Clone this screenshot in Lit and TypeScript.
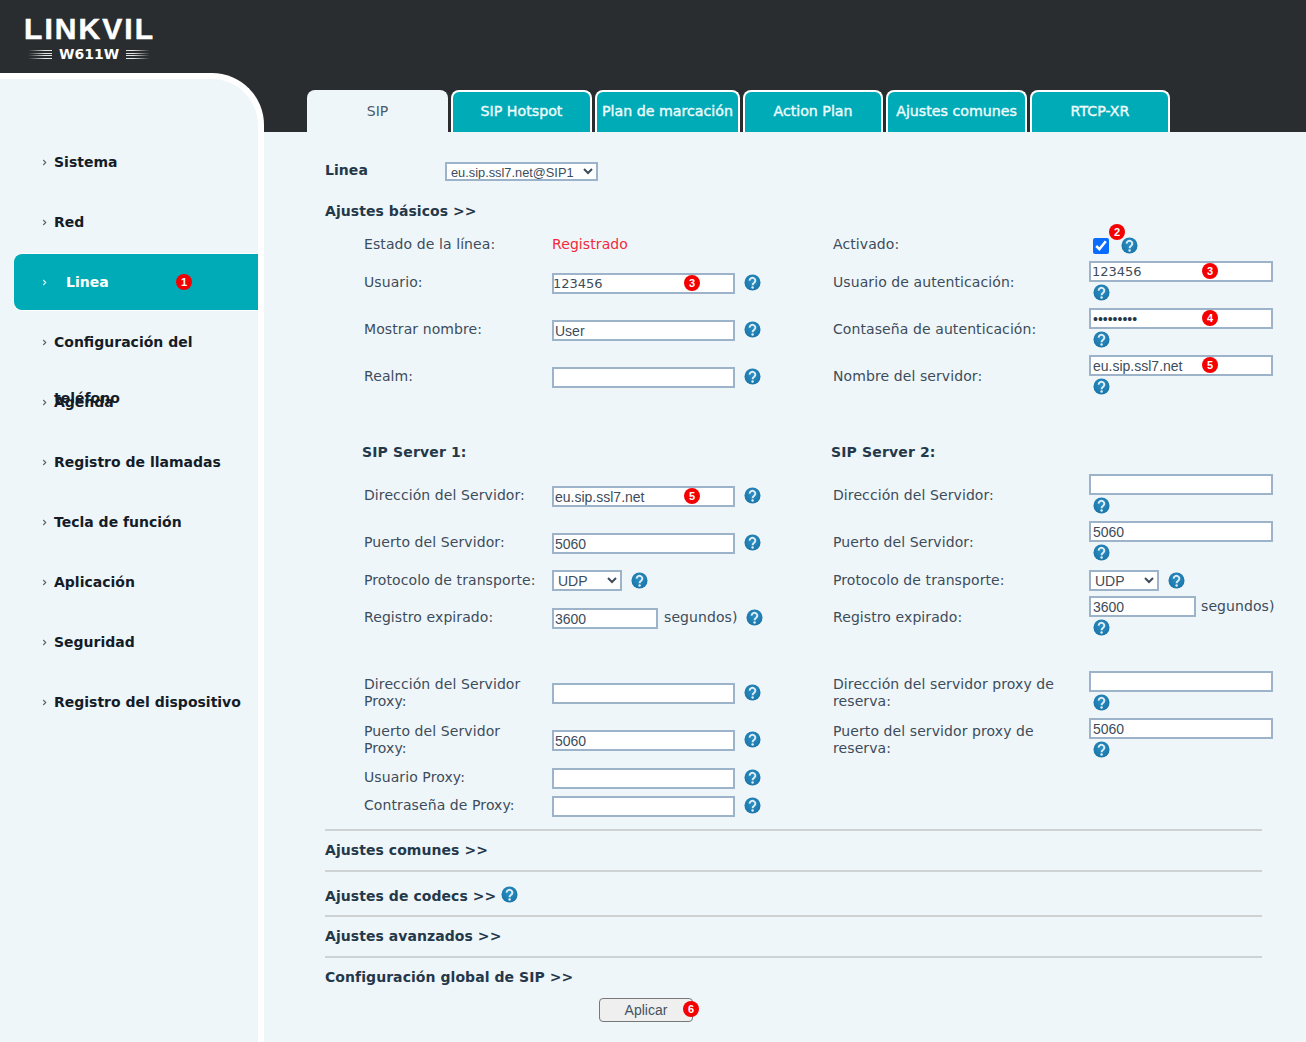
import { LitElement, html, css, svg } from "lit";
import { customElement } from "lit/decorators.js";

const help = () => html`<svg class="help" viewBox="0 0 18 18" aria-hidden="true">
  <defs><radialGradient id="hg" cx="50%" cy="40%" r="60%"><stop offset="0" stop-color="#2a8fc4"/><stop offset="1" stop-color="#1b75a8"/></radialGradient></defs>
  <circle cx="9" cy="9" r="8.5" fill="url(#hg)"/>
  ${svg`<path d="M6 7a3 2.9 0 1 1 4.9 2.2c-1.2.9-1.8 1.3-1.8 2.6" fill="none" stroke="#dfeef6" stroke-width="2.1"/><circle cx="9.1" cy="14.4" r="1.3" fill="#dfeef6"/>`}
</svg>`;

type Inp = { v?: string; cls?: string; badge?: string; type?: string };

const badge = (n?: string, cls = "") => (n ? html`<span class="badge ${cls}">${n}</span>` : "");

const input = (i: Inp) => html`<span class="iw ${i.cls || ""}">
  <input class="tx" type=${i.type || "text"} .value=${i.v || ""} aria-label="campo" />${badge(i.badge)}
</span>`;

const left = (i: Inp) => html`<div class="lf">${input(i)}${help()}</div>`;
const right = (i: Inp) => html`<div class="rf">${input(i)}<span class="hb">${help()}</span></div>`;

const udp = () => html`<select class="udp" aria-label="Protocolo"><option>UDP</option></select>`;

const NAV = [
  "Sistema",
  "Red",
  "Linea",
  "Configuración del teléfono",
  "Agenda",
  "Registro de llamadas",
  "Tecla de función",
  "Aplicación",
  "Seguridad",
  "Registro del dispositivo",
];
const TABS = [
  ["SIP", 141],
  ["SIP Hotspot", 141],
  ["Plan de marcación", 145],
  ["Action Plan", 140],
  ["Ajustes comunes", 141],
  ["RTCP-XR", 140],
] as const;

@customElement("app-root")
export class AppRoot extends LitElement {
  static styles = css`
    :host { display: block; height: 1042px; background: #292d30; font-family: "DejaVu Sans", sans-serif; font-size: 14px; color: #3d4c5b; overflow: hidden; }
    * { box-sizing: border-box; }
    .top { height: 73px; padding: 18px 0 0 24px; }
    .logo { width: 130px; display: flex; flex-direction: column; color: #fff; }
    .brand { font: 700 30px/22px "Liberation Sans", sans-serif; letter-spacing: 2.05px; white-space: nowrap; height: 22px; -webkit-text-stroke: 0.5px #fff; }
    .model { display: flex; align-items: center; gap: 7px; margin-top: 6px; padding-left: 4px; font-weight: 700; font-size: 14px; line-height: 16px; }
    .st { width: 24px; height: 9px; background: repeating-linear-gradient(to bottom, #e5e5e5 0 1px, transparent 1px 2.7px); }
    .st.l { -webkit-mask-image: linear-gradient(to right, transparent, #000 70%); mask-image: linear-gradient(to right, transparent, #000 70%); }
    .st.r { -webkit-mask-image: linear-gradient(to left, transparent, #000 70%); mask-image: linear-gradient(to left, transparent, #000 70%); }
    .body { display: flex; height: 969px; }
    .side { width: 264px; flex: none; background: #eff6f9; border-top: 6px solid #fff; border-right: 6px solid #fff; border-top-right-radius: 52px; padding-top: 53px; }
    .nav { list-style: none; margin: 0; padding: 0; }
    .nav li { height: 60px; position: relative; padding-top: 2px; }
    .item { display: flex; margin-left: 14px; height: 56px; padding-left: 28px; color: #141c28; font-weight: 700; line-height: 56px; border-radius: 8px 0 0 8px; }
    .item .ch { width: 12px; flex: none; display: flex; height: 56px; align-items: center; color: #55626e; }
    .item .ch svg { width: 5px; height: 7px; }
    .item .t { width: 192px; flex: none; }
    .item.on { background: #00abb8; color: #fff; box-shadow: 0 0 0 1px #fff; }
    .item.on .ch { color: #dff4f6; }
    .item.on .t { margin-left: 12px; }
    .item .badge { left: 176px; top: 22px; }
    .main { flex: 1; min-width: 0; display: flex; flex-direction: column; }
    .tabs { height: 59px; padding: 17px 0 0 43px; display: flex; gap: 3px; }
    .tab { height: 42px; border: 2px solid #fff; border-bottom: 0; border-radius: 8px 8px 0 0; background: #00abb8; color: #eefbfc; font-weight: 400; font-size: 14.2px; -webkit-text-stroke: 0.4px #eefbfc; display: flex; align-items: center; justify-content: center; padding-bottom: 3px; white-space: nowrap; }
    .tab.on { background: #eff6f9; border-color: #eff6f9; color: #4a5a68; font-size: 14px; -webkit-text-stroke: 0; }
    .panel { flex: 1; background: #eff6f9; padding: 30px 0 0 61px; }
    .line { display: flex; align-items: center; height: 18px; }
    .line b, .h { font-weight: 700; color: #24384a; letter-spacing: 0.06px; }
    .line b { width: 120px; margin-top: -2px; }
    .line select { width: 153px; height: 19px; font: 12.8px "Liberation Sans", sans-serif; color: #3d4c5b; background: #fff; border: 2px solid #9db3c9; padding: 0; }
    .h { display: block; line-height: 18px; }
    .basic { margin: 22px 0 9px; }
    .form { margin-left: 39px; }
    .row { display: grid; grid-template-columns: 188px 281px 256px 186px; align-items: center; line-height: 17px; letter-spacing: 0.09px; }
    .h30 { height: 30px; } .h47 { height: 47px; } .h28 { height: 28px; }
    .lab { padding-right: 10px; }
    .red { color: #f3283a; }
    .sv { height: 40px; margin-top: 32px; }
    .sv .h { margin-left: -2px; letter-spacing: 0.15px; }
    .spacer { height: 28px; }
    .lf { display: flex; align-items: center; }
    .lf .iw { margin-top: 2px; width: 183px; }
    .lf .iw.short { width: 106px; }
    .lf .tx { padding: 0 1px; }
    .lf .help { margin-left: 9px; }
    .lf .unit { margin-left: 6px; }
    .lf .unit + .help { margin-left: 8px; }
    .lf .iw.dv .tx { padding: 0; text-indent: -1px; }
    .lf .badge { left: 132px; }
    .rf { display: flex; flex-direction: column; align-items: flex-start; margin-bottom: 3px; }
    .hb { display: flex; margin: 2px 0 0 4px; }
    .iw { position: relative; display: inline-block; width: 184px; height: 21px; flex: none; }
    .iw.short { width: 107px; }
    .tx { width: 100%; height: 100%; border: 2px solid #9db3c9; background: #fff; padding: 0 2px; margin: 0; font: 14px "Liberation Sans", sans-serif; color: #3d4c5b; outline: none; }
    .iw.dv .tx { font: 13px "DejaVu Sans", sans-serif; padding: 0 1px; }
    .iw.pw .tx { font: 14px "Liberation Sans", sans-serif; padding: 0 2px; color: #24384a; }
    .help { width: 17px; height: 17px; flex: none; display: block; }
    .badge { position: absolute; width: 16px; height: 16px; border-radius: 50%; background: #f40000; color: #fff; font: 700 11px/16px "Liberation Sans", sans-serif; text-align: center; left: 133px; top: 2px; letter-spacing: 0; }
    .iw.rb .badge { left: 113px; top: 2px; }
    .udp { width: 70px; height: 21px; border: 2px solid #9db3c9; background: #fff; font: 14px "Liberation Sans", sans-serif; color: #3d4c5b; padding: 0; margin: 0; }
    .flow { display: flex; align-items: center; }
    .unit { margin-left: 5px; white-space: nowrap; }
    .chk { position: relative; display: flex; align-items: center; gap: 12px; margin: 3px 0 0 4px; }
    .chk input { width: 16px; height: 16px; margin: 0; accent-color: #0a6cff; }
    .chk .badge { left: 16px; top: -13px; }
    .sec { width: 937px; border-top: 2px solid #cfd2d3; height: 41px; display: flex; align-items: center; gap: 5px; padding-bottom: 1px; }
    .sec.first { margin-top: 10px; }
    .sec.tall { height: 45px; padding: 4px 0 0; }
    .sec .help { margin-top: -3px; }
    .actions { position: relative; margin: 1px 0 0 274px; width: 94px; height: 24px; }
    .apply { width: 94px; height: 24px; background: #efefef; border: 1.5px solid #777; border-radius: 4px; font: 14px "Liberation Sans", sans-serif; color: #46525e; padding: 0; }
    .actions .badge { left: 84px; top: 3px; }
  `;

  private chev() {
    return html`<svg viewBox="0 0 6 8"><path d="M1.5 1l3 3-3 3" fill="none" stroke="currentColor" stroke-width="1.3"/></svg>`;
  }

  render() {
    return html`
      <header class="top">
        <div class="logo">
          <div class="brand">LINKVIL</div>
          <div class="model"><span class="st l"></span><span>W611W</span><span class="st r"></span></div>
        </div>
      </header>
      <div class="body">
        <aside class="side">
          <ul class="nav">
            ${NAV.map((n) => html`<li>
              <div class="item ${n === "Linea" ? "on" : ""}">
                <span class="ch">${this.chev()}</span><span class="t">${n}</span>
                ${n === "Linea" ? badge("1") : ""}
              </div>
            </li>`)}
          </ul>
        </aside>
        <main class="main">
          <nav class="tabs">
            ${TABS.map(([t, w], i) => html`<div class="tab ${i === 0 ? "on" : ""}" style="width:${w}px">${t}</div>`)}
          </nav>
          <section class="panel">
            <div class="line"><b>Linea</b><select aria-label="Linea"><option>eu.sip.ssl7.net@SIP1</option></select></div>
            <span class="h basic">Ajustes básicos &gt;&gt;</span>
            <div class="form">
              <div class="row h30">
                <span class="lab">Estado de la línea:</span><span class="red">Registrado</span>
                <span class="lab">Activado:</span>
                <div class="chk"><input type="checkbox" checked aria-label="Activado" />${badge("2")}${help()}</div>
              </div>
              <div class="row h47">
                <span class="lab">Usuario:</span>${left({ v: "123456", cls: "dv", badge: "3" })}
                <span class="lab">Usuario de autenticación:</span>${right({ v: "123456", cls: "dv rb", badge: "3" })}
              </div>
              <div class="row h47">
                <span class="lab">Mostrar nombre:</span>${left({ v: "User" })}
                <span class="lab">Contaseña de autenticación:</span>${right({ v: "123456789", cls: "pw rb", badge: "4", type: "password" })}
              </div>
              <div class="row h47">
                <span class="lab">Realm:</span>${left({})}
                <span class="lab">Nombre del servidor:</span>${right({ v: "eu.sip.ssl7.net", cls: "rb", badge: "5" })}
              </div>
              <div class="row sv"><span class="h">SIP Server 1:</span><span></span><span class="h">SIP Server 2:</span><span></span></div>
              <div class="row h47">
                <span class="lab">Dirección del Servidor:</span>${left({ v: "eu.sip.ssl7.net", badge: "5" })}
                <span class="lab">Dirección del Servidor:</span>${right({})}
              </div>
              <div class="row h47">
                <span class="lab">Puerto del Servidor:</span>${left({ v: "5060" })}
                <span class="lab">Puerto del Servidor:</span>${right({ v: "5060" })}
              </div>
              <div class="row h28">
                <span class="lab">Protocolo de transporte:</span>
                <div class="lf">${udp()}${help()}</div>
                <span class="lab">Protocolo de transporte:</span>
                <div class="lf">${udp()}${help()}</div>
              </div>
              <div class="row h47">
                <span class="lab">Registro expirado:</span>
                <div class="lf">${input({ v: "3600", cls: "short" })}<span class="unit">segundos)</span>${help()}</div>
                <span class="lab">Registro expirado:</span>
                <div class="rf"><div class="flow">${input({ v: "3600", cls: "short" })}<span class="unit">segundos)</span></div><span class="hb">${help()}</span></div>
              </div>
              <div class="spacer"></div>
              <div class="row h47">
                <span class="lab">Dirección del Servidor Proxy:</span>${left({})}
                <span class="lab">Dirección del servidor proxy de reserva:</span>${right({})}
              </div>
              <div class="row h47">
                <span class="lab">Puerto del Servidor Proxy:</span>${left({ v: "5060" })}
                <span class="lab">Puerto del servidor proxy de reserva:</span>${right({ v: "5060" })}
              </div>
              <div class="row h28"><span class="lab">Usuario Proxy:</span>${left({})}</div>
              <div class="row h28"><span class="lab">Contraseña de Proxy:</span>${left({})}</div>
            </div>
            <div class="sec first"><span class="h">Ajustes comunes &gt;&gt;</span></div>
            <div class="sec tall"><span class="h">Ajustes de codecs &gt;&gt;</span>${help()}</div>
            <div class="sec"><span class="h">Ajustes avanzados &gt;&gt;</span></div>
            <div class="sec"><span class="h">Configuración global de SIP &gt;&gt;</span></div>
            <div class="actions"><button class="apply">Aplicar</button>${badge("6")}</div>
          </section>
        </main>
      </div>
    `;
  }
}
